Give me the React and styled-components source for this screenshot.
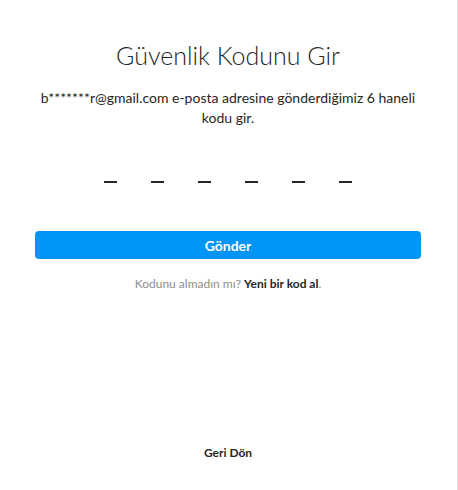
import React, { useState } from "react";
import styled, { createGlobalStyle } from "styled-components";

const GlobalStyle = createGlobalStyle`
  html, body {
    margin: 0;
    padding: 0;
    background: #ffffff;
  }
  body {
    font-family: Lato, "Open Sans", "Liberation Sans", sans-serif;
    color: #262626;
  }
`;

const Page = styled.div`
  box-sizing: border-box;
  width: 458px;
  height: 490px;
  border-right: 1px solid #dbdbdb;
  display: flex;
  flex-direction: column;
  align-items: center;
  padding: 41px 36px 0 35px;
`;

const Title = styled.h1`
  margin: 0;
  font-size: 25px;
  line-height: 28px;
  font-weight: 300;
  color: #262626;
`;

const Description = styled.p`
  margin: 19px 0 0;
  font-size: 14px;
  line-height: 20px;
  text-align: center;
  color: #262626;
`;

const CodeRow = styled.div`
  display: flex;
  gap: 34px;
  margin-top: 35px;
  height: 20px;
  align-items: flex-end;
`;

const Digit = styled.span`
  display: block;
  width: 13px;
  height: 2px;
  background: ${(p) => (p.filled ? "transparent" : "#262626")};
`;

const SubmitButton = styled.button`
  margin-top: 48px;
  width: 100%;
  height: 28px;
  border: none;
  border-radius: 4px;
  background: #0095f6;
  color: #ffffff;
  font-family: inherit;
  font-size: 14px;
  font-weight: 700;
  cursor: pointer;
`;

const Resend = styled.p`
  margin: 17px 0 0;
  font-size: 12px;
  line-height: 16px;
  color: #8e8e8e;
`;

const ResendLink = styled.a`
  color: #262626;
  font-weight: 700;
  text-decoration: none;
  cursor: pointer;
`;

const BackLink = styled.a`
  margin-top: auto;
  margin-bottom: 29px;
  font-size: 12px;
  line-height: 16px;
  font-weight: 700;
  color: #262626;
  cursor: pointer;
`;

export default function App() {
  const [code] = useState(["", "", "", "", "", ""]);

  return (
    <>
      <GlobalStyle />
      <Page>
        <Title>Güvenlik Kodunu Gir</Title>
        <Description>
          b*******r@gmail.com e-posta adresine gönderdiğimiz 6 haneli kodu gir.
        </Description>
        <CodeRow>
          {code.map((c, idx) => (
            <Digit key={idx} filled={!!c} />
          ))}
        </CodeRow>
        <SubmitButton>Gönder</SubmitButton>
        <Resend>
          Kodunu almadın mı? <ResendLink>Yeni bir kod al</ResendLink>.
        </Resend>
        <BackLink>Geri Dön</BackLink>
      </Page>
    </>
  );
}
